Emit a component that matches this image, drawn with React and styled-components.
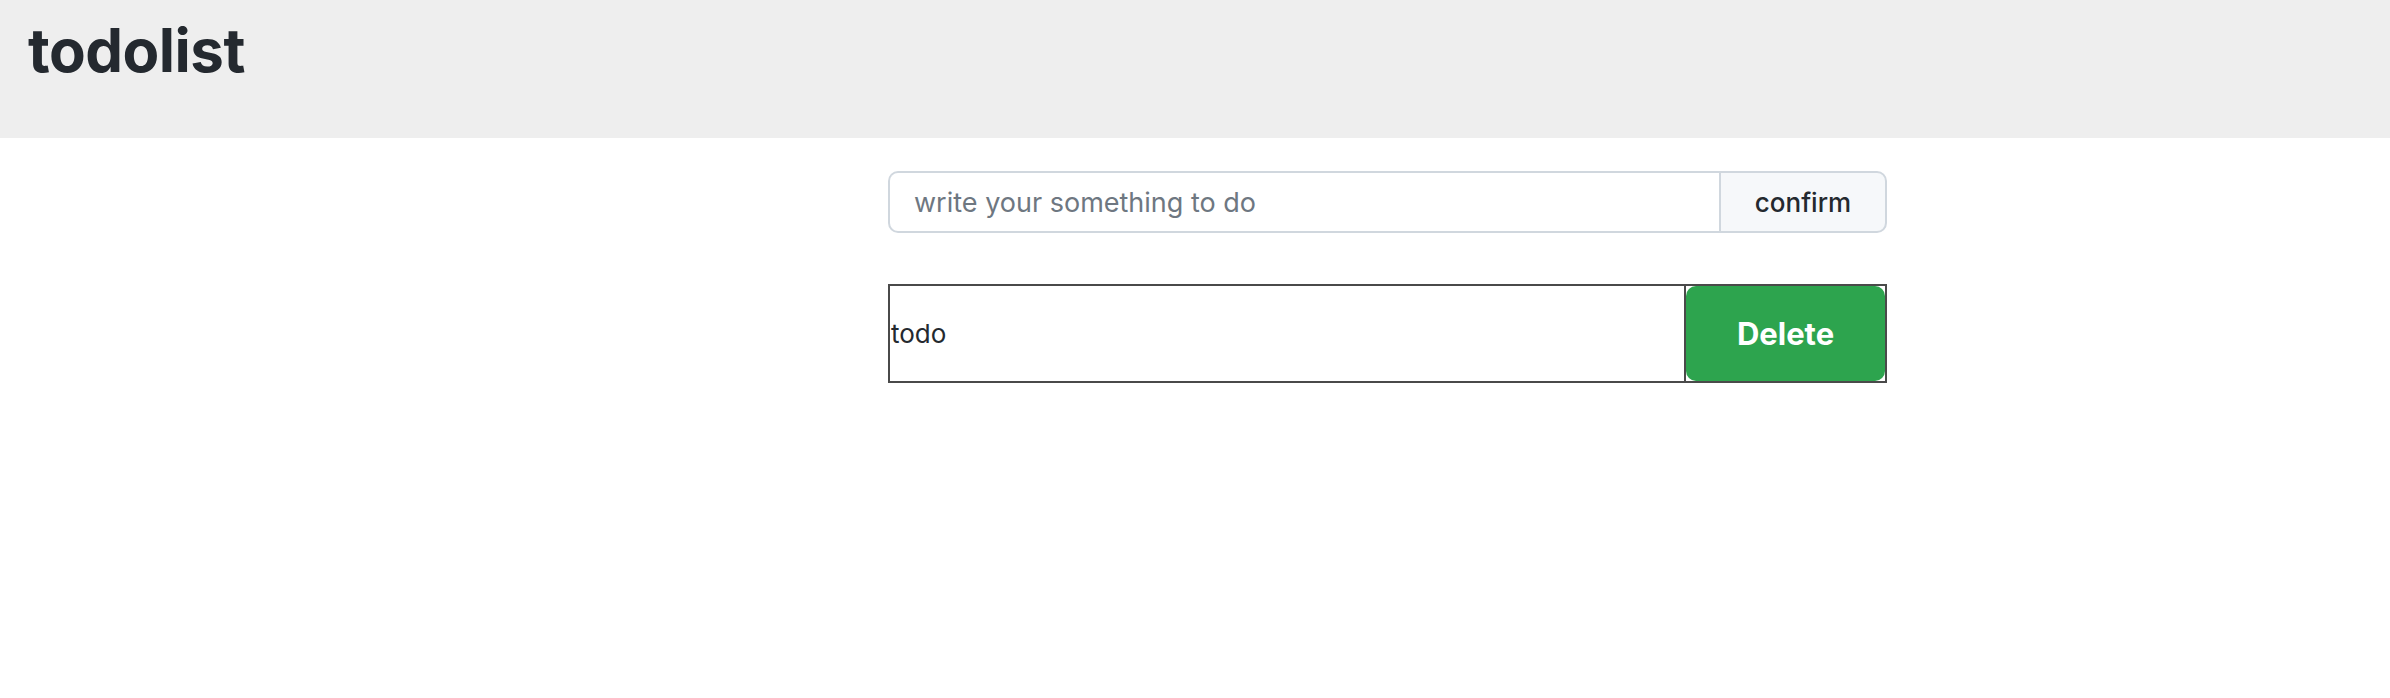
import styled, { createGlobalStyle } from 'styled-components';

const GlobalStyle = createGlobalStyle`
  body {
    margin: 0;
    font-family: Inter, 'Noto Sans', 'Liberation Sans', sans-serif;
    color: #24292f;
    background: #fff;
  }
  * {
    box-sizing: border-box;
  }
`;

const todos = [{ id: 1, text: 'todo' }];

const App = () => {
  return (
    <>
      <GlobalStyle />
      <Header>
        <Title>todolist</Title>
      </Header>
      <Main>
        <InputGroup>
          <TodoInput placeholder='write your something to do' />
          <ConfirmButton>confirm</ConfirmButton>
        </InputGroup>
        <TodoList>
          {todos.map((todo) => (
            <TodoRow key={todo.id}>
              <TodoText>{todo.text}</TodoText>
              <DeleteButton>Delete</DeleteButton>
            </TodoRow>
          ))}
        </TodoList>
      </Main>
    </>
  );
};

export default App;

const Header = styled.header`
  height: 138px;
  background-color: #eeeeee;
  padding: 14px 28px 0;
`;

const Title = styled.h1`
  margin: 0;
  font-size: 60px;
  font-weight: 700;
  line-height: 1.2;
  letter-spacing: -0.5px;
  color: #24292f;
`;

const Main = styled.main`
  padding: 33px 0 0 888px;
  width: 1887px;
  display: flex;
  flex-direction: column;
  gap: 51px;
`;

const InputGroup = styled.div`
  display: flex;
  height: 62px;
  width: 999px;
`;

const TodoInput = styled.input`
  flex: 1;
  height: 100%;
  border: 2px solid #d0d7de;
  border-right: none;
  border-radius: 10px 0 0 10px;
  padding: 0 24px;
  font-family: inherit;
  font-size: 27px;
  color: #24292f;
  outline: none;

  &::placeholder {
    color: #6e7781;
  }
`;

const ConfirmButton = styled.button`
  width: 168px;
  height: 100%;
  background-color: #f6f8fa;
  border: 2px solid #d0d7de;
  border-radius: 0 10px 10px 0;
  font-family: inherit;
  font-size: 26px;
  font-weight: 500;
  color: #24292f;
  cursor: pointer;
`;

const TodoList = styled.ul`
  list-style: none;
  margin: 0;
  padding: 0;
  width: 999px;
`;

const TodoRow = styled.li`
  display: flex;
  height: 99px;
  border: 2px solid #4a4a4a;
`;

const TodoText = styled.div`
  flex: 1;
  display: flex;
  align-items: center;
  font-size: 26px;
  color: #24292f;
  padding-left: 1px;
  border-right: 2px solid #4a4a4a;
`;

const DeleteButton = styled.button`
  width: 199px;
  height: 100%;
  background-color: #2da44e;
  border: none;
  border-radius: 10px;
  color: #fff;
  font-family: inherit;
  font-size: 31px;
  font-weight: 700;
  cursor: pointer;
`;
